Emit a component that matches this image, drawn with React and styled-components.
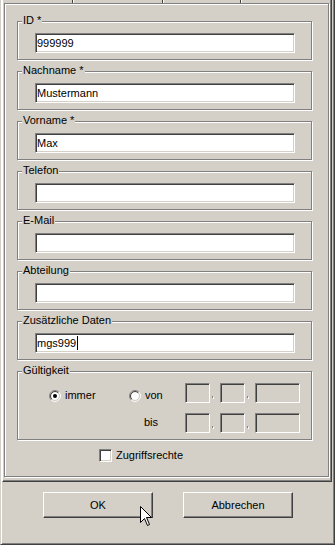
import React from "react";
import styled, { createGlobalStyle } from "styled-components";

const Global = createGlobalStyle`
  html, body { margin: 0; padding: 0; background: #d4d0c8; overflow: hidden; }
  * { box-sizing: border-box; }
`;

const Window = styled.div`
  position: relative;
  width: 335px;
  height: 545px;
  background: #d4d0c8;
  border-left: 1px solid #d4d0c8;
  border-right: 1px solid #404040;
  border-bottom: 1px solid #404040;
  box-shadow: inset 1px 0 #fff, inset -1px 0 #808080, inset 0 -1px #808080;
  font-family: "Liberation Sans", Arial, sans-serif;
  font-size: 11px;
  line-height: 13px;
  color: #000;
  display: flex;
  flex-direction: column;
`;

const TabControl = styled.div`
  margin-left: 1px;
  width: 330px;
  height: 482px;
  border-left: 1px solid #fff;
  border-right: 1px solid #404040;
  border-bottom: 1px solid #404040;
  box-shadow: inset -1px 0 #808080, inset 0 -1px #808080;
  display: flex;
  flex-direction: column;
`;

const TabStrip = styled.div`
  display: flex;
  height: 3px;
  flex: none;
`;

const Tab = styled.div`
  height: 3px;
  width: ${(p) => (p.$w ? `${p.$w}px` : "auto")};
  flex: ${(p) => (p.$w ? "none" : "1")};
  border-left: ${(p) => (p.$first ? "none" : "1px solid #fff")};
  border-right: ${(p) => (p.$last ? "none" : "1px solid #404040")};
`;

const TabPage = styled.div`
  margin-left: 1px;
  width: 325px;
  height: 474px;
  flex: none;
  border: 1px solid #808080;
  box-shadow: inset 1px 1px #fff, 1px 1px #fff;
  display: flex;
  flex-direction: column;
  padding: 17px 0 0 12px;
`;

const GroupBox = styled.div`
  position: relative;
  width: 295px;
  margin-bottom: 11px;
  border: 1px solid #808080;
  box-shadow: inset 1px 1px #fff, 1px 1px #fff;
  padding: 11px 16px 6px 17px;
`;

const Legend = styled.span`
  position: absolute;
  left: 4px;
  top: -8px;
  padding: 0 1px;
  background: #d4d0c8;
  line-height: 13px;
  white-space: nowrap;
`;

const Field = styled.div`
  width: ${(p) => p.$w}px;
  height: 20px;
  flex: none;
  background: ${(p) => (p.$disabled ? "#d4d0c8" : "#fff")};
  border: 1px solid;
  border-color: #808080 #fff #fff #808080;
  box-shadow: inset 1px 1px #404040, inset -1px -1px #d4d0c8;
  padding: 0 1px;
  display: flex;
  align-items: center;
  white-space: nowrap;
`;

const Caret = styled.span`
  display: inline-block;
  width: 1px;
  height: 14px;
  background: #000;
  margin-left: 1px;
`;

const ValidityGrid = styled.div`
  display: grid;
  grid-template-columns: 80px 56px auto;
  grid-template-rows: 20px 20px;
  row-gap: 10px;
  margin-left: 14px;
`;

const RadioOption = styled.div`
  display: flex;
  align-items: center;
  gap: 4px;
  align-self: end;
  margin-bottom: 1px;
`;

const BisLabel = styled.div`
  align-self: center;
  padding-left: 15px;
  margin-top: -2px;
`;

const DateGroup = styled.div`
  display: flex;
`;

const Sep = styled.div`
  width: 10px;
  display: flex;
  align-items: flex-end;
  padding: 0 0 5px 2px;
`;

const Dot = styled.div`
  width: 1px;
  height: 2px;
  background: #808080;
  box-shadow: 1px 1px #fff;
`;

const CheckRow = styled.div`
  display: flex;
  align-items: center;
  gap: 4px;
  margin: -2px 0 0 82px;
`;

const CheckBox = styled.div`
  width: 13px;
  height: 13px;
  background: #fff;
  border: 1px solid;
  border-color: #808080 #fff #fff #808080;
  box-shadow: inset 1px 1px #404040, inset -1px -1px #d4d0c8;
`;

const ButtonBar = styled.div`
  display: flex;
  gap: 30px;
  padding: 10px 0 0 42px;
`;

const Button = styled.button`
  width: 110px;
  height: 26px;
  padding: 0;
  margin: 0;
  background: #d4d0c8;
  font: inherit;
  color: #000;
  border: 1px solid;
  border-color: #fff #404040 #404040 #fff;
  box-shadow: inset -1px -1px #808080;
  display: flex;
  align-items: center;
  justify-content: center;
`;

const Cursor = styled.svg`
  position: absolute;
  left: 139px;
  top: 506px;
`;

function Radio({ checked }) {
  const c = 6;
  const p = (r, sx, sy) => `${c + sx * r * 0.7071} ${c + sy * r * 0.7071}`;
  return (
    <svg width="12" height="12" viewBox="0 0 12 12">
      <circle cx="6" cy="6" r="4" fill="#fff" />
      <path d={`M${p(5.5, -1, 1)} A5.5 5.5 0 0 1 ${p(5.5, 1, -1)}`} stroke="#808080" fill="none" />
      <path d={`M${p(5.5, 1, -1)} A5.5 5.5 0 0 1 ${p(5.5, -1, 1)}`} stroke="#fff" fill="none" />
      <path d={`M${p(4.5, -1, 1)} A4.5 4.5 0 0 1 ${p(4.5, 1, -1)}`} stroke="#404040" fill="none" />
      <path d={`M${p(4.5, 1, -1)} A4.5 4.5 0 0 1 ${p(4.5, -1, 1)}`} stroke="#d4d0c8" fill="none" />
      {checked && <circle cx="6" cy="6" r="2" fill="#000" />}
    </svg>
  );
}

const fields = [
  { label: "ID *", value: "999999" },
  { label: "Nachname *", value: "Mustermann" },
  { label: "Vorname *", value: "Max" },
  { label: "Telefon", value: "" },
  { label: "E-Mail", value: "" },
  { label: "Abteilung", value: "" },
  { label: "Zusätzliche Daten", value: "mgs999", caret: true },
];

function DateFields() {
  return (
    <DateGroup>
      <Field $w={25} $disabled />
      <Sep><Dot /></Sep>
      <Field $w={25} $disabled />
      <Sep><Dot /></Sep>
      <Field $w={45} $disabled />
    </DateGroup>
  );
}

export default function App() {
  return (
    <>
      <Global />
      <Window>
        <TabControl>
          <TabStrip>
            <Tab $w={70} $first />
            <Tab $w={90} />
            <Tab $w={78} />
            <Tab $last />
          </TabStrip>
          <TabPage>
            {fields.map((f) => (
              <GroupBox key={f.label}>
                <Legend>{f.label}</Legend>
                <Field $w={260}>
                  {f.value}
                  {f.caret && <Caret />}
                </Field>
              </GroupBox>
            ))}
            <GroupBox>
              <Legend>Gültigkeit</Legend>
              <ValidityGrid>
                <RadioOption>
                  <Radio checked />
                  <span>immer</span>
                </RadioOption>
                <RadioOption>
                  <Radio />
                  <span>von</span>
                </RadioOption>
                <DateFields />
                <div />
                <BisLabel>bis</BisLabel>
                <DateFields />
              </ValidityGrid>
            </GroupBox>
            <CheckRow>
              <CheckBox />
              <span>Zugriffsrechte</span>
            </CheckRow>
          </TabPage>
        </TabControl>
        <ButtonBar>
          <Button>OK</Button>
          <Button>Abbrechen</Button>
        </ButtonBar>
        <Cursor width="13" height="21" viewBox="0 0 13 21">
          <path
            d="M0.5 0.5 V16.5 L4.5 12.5 L7.5 19.5 L9.5 18.5 L6.5 11.5 H11.5 Z"
            fill="#fff"
            stroke="#000"
            strokeWidth="1"
            strokeLinejoin="miter"
          />
        </Cursor>
      </Window>
    </>
  );
}
